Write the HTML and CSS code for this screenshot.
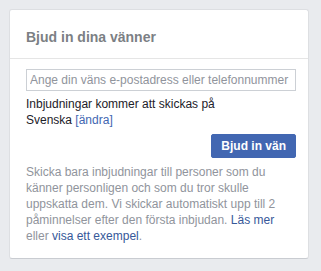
FILE: index.html
```html
<!DOCTYPE html>
<html lang="sv">
<head>
<meta charset="utf-8">
<title>Bjud in dina vänner</title>
<link rel="stylesheet" href="styles.css">
</head>
<body>
<div class="page">
  <section class="card">
    <header class="card-header">Bjud in dina vänner</header>
    <div class="card-body">
      <input class="invite-input" type="text" placeholder="Ange din väns e-postadress eller telefonnummer">
      <p class="lang-note">Inbjudningar kommer att skickas på<br>Svenska <a class="link" href="#">[ändra]</a></p>
      <div class="actions">
        <button class="btn-primary" type="button">Bjud in vän</button>
      </div>
      <p class="help">Skicka bara inbjudningar till personer som du känner personligen och som du tror skulle uppskatta dem. Vi skickar automatiskt upp till 2 påminnelser efter den första inbjudan. <a class="dark-link" href="#">Läs mer</a> eller <a class="dark-link" href="#">visa ett exempel</a>.</p>
    </div>
  </section>
</div>
</body>
</html>
```
FILE: styles.css
```css
html, body {
  margin: 0;
  padding: 0;
  background: #e9ebee;
}
body {
  font-family: "Liberation Sans", Arial, Helvetica, sans-serif;
  font-size: 12px;
  color: #1d2129;
}
.page {
  padding: 9px 12px 12px 9px;
}
.card {
  box-sizing: border-box;
  width: 300px;
  background: #fff;
  border: 1px solid #dddfe2;
  border-bottom-color: #c9ccd1;
  border-radius: 3px;
}
.card-header {
  box-sizing: border-box;
  height: 49px;
  padding: 18px 16px 0;
  font-size: 14px;
  line-height: 18px;
  font-weight: bold;
  color: #7c7f84;
  border-bottom: 1px solid #e5e5e5;
}
.card-body {
  padding: 10px 12px 14px 16px;
}
.invite-input {
  box-sizing: border-box;
  display: block;
  width: 270px;
  height: 22px;
  margin: 0;
  padding: 0 3px;
  border: 1px solid #ccd0d5;
  border-radius: 0;
  font-family: inherit;
  font-size: 12px;
  color: #1d2129;
  outline: none;
}
.invite-input::placeholder {
  color: #90949c;
  opacity: 1;
}
.lang-note {
  margin: 5px 0 0;
  line-height: 16px;
}
.link {
  color: #4267b2;
  text-decoration: none;
}
.actions {
  display: flex;
  justify-content: flex-end;
  width: 270px;
  margin-top: 6px;
}
.btn-primary {
  box-sizing: border-box;
  height: 24px;
  padding: 0 9px;
  border: 1px solid #4267b2;
  border-radius: 2px;
  background: #4267b2;
  color: #fff;
  font-family: inherit;
  font-size: 12px;
  font-weight: bold;
  line-height: 22px;
}
.help {
  margin: 6px 0 0;
  line-height: 16px;
  color: #90949c;
}
.dark-link {
  color: #365899;
  text-decoration: none;
}
```
